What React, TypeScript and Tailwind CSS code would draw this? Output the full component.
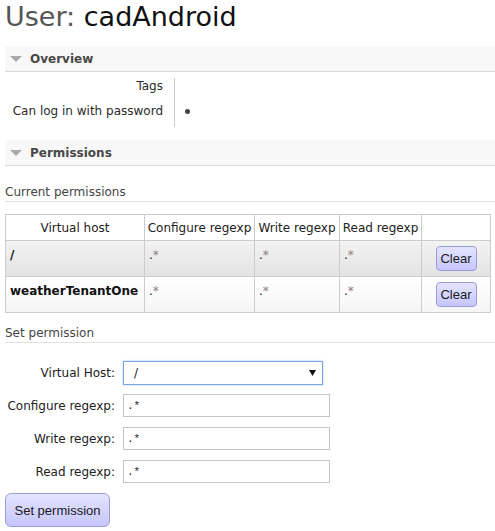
import React from "react";

function SectionHeader({ title, className }: { title: string; className?: string }) {
  return (
    <div className={"h-[26px] bg-[#f8f8f8] border-b border-[#dadada] flex items-start pt-[6px] pl-[5px] " + (className || "")}>
      <svg width="12" height="6" viewBox="0 0 12 6" className="mt-[4px] shrink-0">
        <polygon points="0,0 12,0 6,6" fill="#a8a8a8" />
      </svg>
      <span className="ml-[8px] font-bold text-[#484848] leading-[14px]">{title}</span>
    </div>
  );
}

function SubHeader({ title, className }: { title: string; className?: string }) {
  return (
    <div className={"pb-[2px] border-b border-[#e2e2e2] text-[#444] leading-[14px] " + (className || "")}>
      {title}
    </div>
  );
}

function Regexp() {
  return (
    <span className="whitespace-nowrap">
      <span className="text-[#222]">.</span>
      <span className="text-[#8c8080]">*</span>
    </span>
  );
}

function ClearButton() {
  return (
    <button className="w-[41px] h-[25px] rounded-[4px] border border-[#9c9cd6] bg-linear-to-b from-[#e4e4ff] to-[#c6c6ff] font-['Liberation_Sans',Arial,sans-serif] text-[13px] text-[#1a1a1a] leading-[15px]">
      Clear
    </button>
  );
}

function PermRow({ vhost, bg }: { vhost: string; bg: string }) {
  return (
    <div className={"flex h-[36px] " + bg}>
      <div className="w-[139px] border-r border-b border-[#cccccc] pt-[7px] pl-[4px] font-bold text-[#111] whitespace-nowrap">
        {vhost}
      </div>
      <div className="w-[110px] border-r border-b border-[#cccccc] pt-[7px] pl-[4px]">
        <Regexp />
      </div>
      <div className="w-[85px] border-r border-b border-[#cccccc] pt-[7px] pl-[4px]">
        <Regexp />
      </div>
      <div className="w-[82px] border-r border-b border-[#cccccc] pt-[7px] pl-[4px]">
        <Regexp />
      </div>
      <div className="w-[69px] border-r border-b border-[#cccccc] flex justify-center pt-[5px]">
        <ClearButton />
      </div>
    </div>
  );
}

function FormRow({ label, children, className }: { label: string; children: React.ReactNode; className?: string }) {
  return (
    <div className={"flex items-center " + (className || "")}>
      <div className="w-[110px] shrink-0 text-right whitespace-nowrap text-[#222]">{label}</div>
      <div className="ml-[8px]">{children}</div>
    </div>
  );
}

function TextInput() {
  return (
    <div className="w-[207px] h-[23px] border border-[#c4c4c4] bg-white flex items-center pl-[3px] font-['Liberation_Mono','Courier_New',monospace] text-[11px] text-[#222]">
      .*
    </div>
  );
}

export default function App() {
  return (
    <div className="w-[495px] min-h-[531px] bg-white font-['DejaVu_Sans',Verdana,sans-serif] text-[12px] leading-[14px] text-[#222] pl-[5px]">
      <h1 className="h-[34px] text-[27px] leading-[34px] font-normal text-[#555] whitespace-nowrap">
        User: <span className="text-[#111]">cadAndroid</span>
      </h1>

      <SectionHeader title="Overview" className="mt-[12px]" />

      <div className="mt-[6px]">
        <div className="flex h-[25px]">
          <div className="w-[170px] shrink-0 text-right pr-[11px] border-r border-[#cccccc] pt-[1px] text-[#2a2a2a]">Tags</div>
          <div className="pl-[10px]"></div>
        </div>
        <div className="flex h-[24px]">
          <div className="w-[170px] shrink-0 text-right pr-[11px] border-r border-[#cccccc] pt-[1px] text-[#2a2a2a] whitespace-nowrap">
            Can log in with password
          </div>
          <div className="pl-[10px]">
            <span className="block w-[5px] h-[5px] rounded-full bg-[#444] mt-[6px]"></span>
          </div>
        </div>
      </div>

      <SectionHeader title="Permissions" className="mt-[13px]" />

      <SubHeader title="Current permissions" className="mt-[19px]" />

      <div className="mt-[12px] w-[486px] border-l border-t border-[#cccccc]">
        <div className="flex h-[26px] bg-white text-[#222]">
          <div className="w-[139px] border-r border-b border-[#cccccc] flex items-center justify-center whitespace-nowrap">Virtual host</div>
          <div className="w-[110px] border-r border-b border-[#cccccc] flex items-center justify-center whitespace-nowrap">Configure regexp</div>
          <div className="w-[85px] border-r border-b border-[#cccccc] flex items-center justify-center whitespace-nowrap">Write regexp</div>
          <div className="w-[82px] border-r border-b border-[#cccccc] flex items-center justify-center whitespace-nowrap">Read regexp</div>
          <div className="w-[69px] border-r border-b border-[#cccccc]"></div>
        </div>
        <PermRow vhost="/" bg="bg-linear-to-b from-[#f3f3f3] to-[#e3e3e3]" />
        <PermRow vhost="weatherTenantOne" bg="bg-linear-to-b from-[#ffffff] to-[#f5f5f5]" />
      </div>

      <SubHeader title="Set permission" className="mt-[13px]" />

      <FormRow label="Virtual Host:" className="mt-[18px]">
        <div className="w-[200px] h-[24px] border border-[#7ba6e6] shadow-[0_0_2px_#a8c6f0] bg-white flex items-center justify-between pl-[10px] pr-[6px] text-[#222]">
          <span>/</span>
          <svg width="7" height="6" viewBox="0 0 7 6">
            <polygon points="0,0 7,0 3.5,6" fill="#111" />
          </svg>
        </div>
      </FormRow>
      <FormRow label="Configure regexp:" className="mt-[9px]">
        <TextInput />
      </FormRow>
      <FormRow label="Write regexp:" className="mt-[10px]">
        <TextInput />
      </FormRow>
      <FormRow label="Read regexp:" className="mt-[10px]">
        <TextInput />
      </FormRow>

      <button className="mt-[10px] w-[105px] h-[34px] rounded-[6px] border border-[#9c9cd6] bg-linear-to-b from-[#e4e4ff] to-[#c6c6ff] font-['Liberation_Sans',Arial,sans-serif] text-[13px] text-[#1a1a1a] leading-[15px]">
        Set permission
      </button>
    </div>
  );
}
